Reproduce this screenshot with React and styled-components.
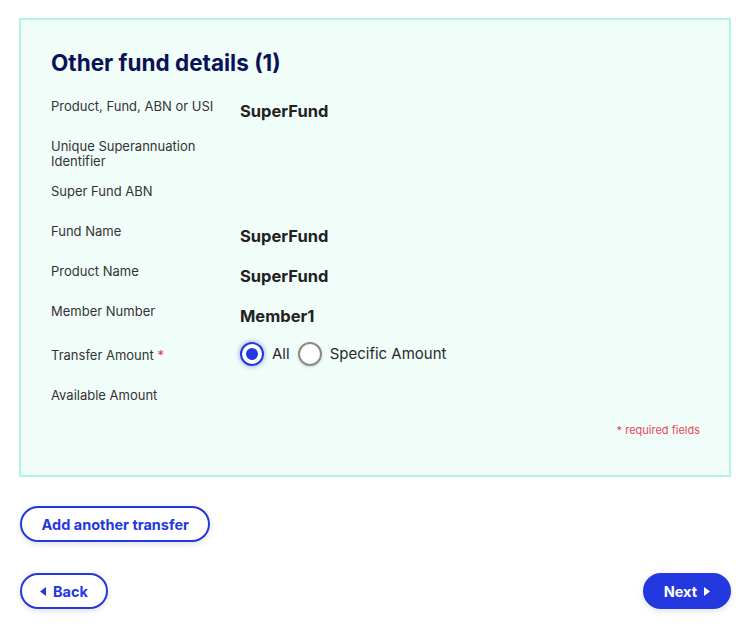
import React from "react"
import styled, { createGlobalStyle } from "styled-components"

const GlobalStyle = createGlobalStyle`
  body {
    margin: 0;
    background: #fff;
    font-family: Inter, "Noto Sans", sans-serif;
    color: #2a2a2a;
  }
`

const Page = styled.div`
  padding: 18px 19px 23px 19px;
  display: flex;
  flex-direction: column;
`

const Panel = styled.section`
  background: #f0fdf9;
  border: 2px solid #b2f5dd;
  padding: 29px 29px 38px 30px;
  display: flex;
  flex-direction: column;
`

const Title = styled.h2`
  margin: 0 0 20px 0;
  font-size: 22.5px;
  line-height: 28px;
  font-weight: 700;
  color: #0b1157;
`

const Row = styled.div`
  display: grid;
  grid-template-columns: 189px 1fr;
  margin-bottom: 14px;
`

const Label = styled.div`
  font-size: 13px;
  line-height: 14.5px;
  color: #333;
  padding-top: ${p => p.$offset ?? 2}px;
  padding-right: 16px;
`

const Star = styled.span`
  color: #e8304a;
`

const Value = styled.div`
  min-height: 24px;
  margin-top: 2px;
  font-size: 16.5px;
  line-height: 24px;
  font-weight: 700;
  color: #222;
`

const RadioGroup = styled.div`
  display: flex;
  align-items: flex-start;
  gap: 8px;
  height: 30px;
`

const RadioOption = styled.label`
  display: flex;
  align-items: center;
  gap: 8px;
  font-size: 15px;
  line-height: 24px;
  color: #2a2a2a;
`

const RadioDot = styled.span`
  width: 24px;
  height: 24px;
  box-sizing: border-box;
  border-radius: 50%;
  background: #fff;
  border: 2px solid ${p => (p.$on ? "#2438e0" : "#8a8a8a")};
  box-shadow: ${p =>
    p.$on ? "0 0 4px 1px rgba(36, 56, 224, 0.35)" : "0 1px 3px rgba(0,0,0,0.15)"};
  display: flex;
  align-items: center;
  justify-content: center;
  &::after {
    content: "";
    width: 12px;
    height: 12px;
    border-radius: 50%;
    background: ${p => (p.$on ? "#2438e0" : "transparent")};
  }
`

const Required = styled.div`
  align-self: flex-end;
  font-size: 11px;
  line-height: 14px;
  color: #e8485a;
  margin-top: -3px;
`

const Button = styled.button`
  font-family: inherit;
  height: 36px;
  box-sizing: border-box;
  border-radius: 18px;
  border: 2px solid #2438e0;
  background: ${p => (p.$primary ? "#2438e0" : "#fff")};
  color: ${p => (p.$primary ? "#fff" : "#2438e0")};
  font-size: 14.5px;
  font-weight: 700;
  padding: 0 ${p => p.$pad || 18}px;
  display: inline-flex;
  align-items: center;
  justify-content: center;
  gap: 7px;
  box-shadow: 0 2px 6px rgba(0, 0, 0, 0.12);
  cursor: pointer;
`

const AddRow = styled.div`
  margin-top: 29px;
  padding-left: 1px;
  display: flex;
`

const NavRow = styled.div`
  margin-top: 31px;
  padding-left: 1px;
  display: flex;
  justify-content: space-between;
`

const Caret = ({ dir }) => (
  <svg width="6" height="9" viewBox="0 0 6 9">
    {dir === "left" ? (
      <path d="M6 0 L0 4.5 L6 9 Z" fill="currentColor" />
    ) : (
      <path d="M0 0 L6 4.5 L0 9 Z" fill="currentColor" />
    )}
  </svg>
)

const rows = [
  { label: "Product, Fund, ABN or USI", value: "SuperFund" },
  { label: "Unique Superannuation Identifier", value: "" },
  { label: "Super Fund ABN", value: "" },
  { label: "Fund Name", value: "SuperFund" },
  { label: "Product Name", value: "SuperFund" },
  { label: "Member Number", value: "Member1" },
]

export default function App() {
  return (
    <>
      <GlobalStyle />
      <Page>
        <Panel>
          <Title>Other fund details (1)</Title>
          {rows.map(r => (
            <Row key={r.label}>
              <Label>{r.label}</Label>
              <Value>{r.value}</Value>
            </Row>
          ))}
          <Row>
            <Label $offset={6}>
              Transfer Amount <Star>*</Star>
            </Label>
            <RadioGroup>
              <RadioOption>
                <RadioDot $on />
                All
              </RadioOption>
              <RadioOption>
                <RadioDot />
                Specific Amount
              </RadioOption>
            </RadioGroup>
          </Row>
          <Row>
            <Label>Available Amount</Label>
            <Value />
          </Row>
          <Required>* required fields</Required>
        </Panel>
        <AddRow>
          <Button $pad={19.5}>Add another transfer</Button>
        </AddRow>
        <NavRow>
          <Button $pad={18}>
            <Caret dir="left" />
            Back
          </Button>
          <Button $primary $pad={19}>
            Next
            <Caret dir="right" />
          </Button>
        </NavRow>
      </Page>
    </>
  )
}
